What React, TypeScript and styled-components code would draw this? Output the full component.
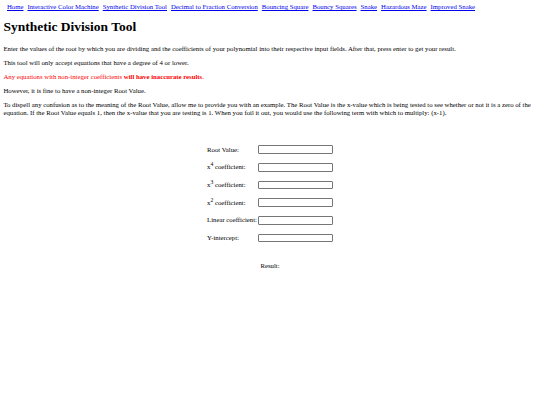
import React from 'react';
import styled, { createGlobalStyle } from 'styled-components';

// Sizes are those of a 1280px wide page shown at 540px (scale 0.421875).
const GlobalStyle = createGlobalStyle`
  body {
    margin: 3.4px;
    font-family: "Liberation Serif", "Times New Roman", serif;
    font-size: 6.75px;
    line-height: 7.9px;
    color: #000;
    background: #fff;
  }
`;

const Nav = styled.nav`
  display: flex;
  gap: 4px;
  padding-left: 3.6px;
`;

const NavLink = styled.a`
  color: #0000ee;
  text-decoration: underline;
`;

const Title = styled.h1`
  font-size: 13.5px;
  line-height: 15.5px;
  margin: 8px 0 10.2px;
`;

const Text = styled.p<{ $warn?: boolean }>`
  margin: 6.1px 0;
  color: ${(p) => (p.$warn ? '#ff0000' : '#000')};
`;

const Form = styled.table`
  margin: 23.5px auto 0;
  border-collapse: separate;
  border-spacing: 1px;
`;

const Label = styled.td`
  padding: 4.1px 0;
  text-align: left;
  white-space: nowrap;

  sup {
    line-height: 0;
  }
`;

const Field = styled.td`
  padding: 4.1px 0;
`;

const Input = styled.input`
  box-sizing: border-box;
  display: block;
  width: 75px;
  height: 8.5px;
  border: 0.6px solid #767676;
  border-radius: 1px;
  padding: 0 1px;
  font-size: 5.6px;
`;

const Result = styled.p`
  text-align: center;
  margin: 15px 0 0;
`;

const links = [
  'Home',
  'Interactive Color Machine',
  'Synthetic Division Tool',
  'Decimal to Fraction Conversion',
  'Bouncing Square',
  'Bouncy Squares',
  'Snake',
  'Hazardous Maze',
  'Improved Snake',
];

const rows: { label: React.ReactNode; id: string }[] = [
  { id: 'root', label: 'Root Value:' },
  { id: 'x4', label: <>x<sup>4</sup> coefficient:</> },
  { id: 'x3', label: <>x<sup>3</sup> coefficient:</> },
  { id: 'x2', label: <>x<sup>2</sup> coefficient:</> },
  { id: 'lin', label: 'Linear coefficient:' },
  { id: 'y', label: 'Y-intercept:' },
];

const App: React.FC = () => {
  return (
    <>
      <GlobalStyle />
      <Nav>
        {links.map((l) => (
          <NavLink key={l} href="#">
            {l}
          </NavLink>
        ))}
      </Nav>
      <Title>Synthetic Division Tool</Title>
      <Text>
        Enter the values of the root by which you are dividing and the coefficients of your polynomial into their
        respective input fields. After that, press enter to get your result.
      </Text>
      <Text>This tool will only accept equations that have a degree of 4 or lower.</Text>
      <Text $warn>
        Any equations with non-integer coefficients <b>will have inaccurate results</b>.
      </Text>
      <Text>However, it is fine to have a non-integer Root Value.</Text>
      <Text>
        To dispell any confusion as to the meaning of the Root Value, allow me to provide you with an example. The
        Root Value is the x-value which is being tested to see whether or not it is a zero of the equation. If the
        Root Value equals 1, then the x-value that you are testing is 1. When you foil it out, you would use the
        following term with which to multiply: (x-1).
      </Text>
      <Form>
        <tbody>
          {rows.map((r) => (
            <tr key={r.id}>
              <Label>{r.label}</Label>
              <Field>
                <Input type="text" />
              </Field>
            </tr>
          ))}
        </tbody>
      </Form>
      <Result>Result:</Result>
    </>
  );
};

export default App;
